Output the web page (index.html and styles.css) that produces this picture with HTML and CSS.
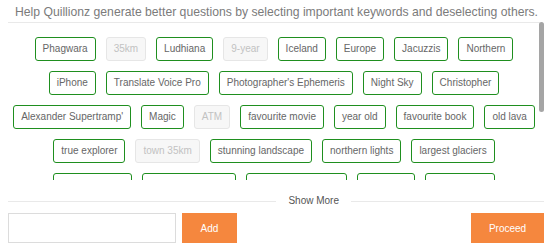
FILE: index.html
```html
<!DOCTYPE html>
<html>
<head>
<meta charset="utf-8">
<link rel="stylesheet" href="styles.css">
</head>
<body>
<div class="page">
  <div class="intro">Help Quillionz generate better questions by selecting important keywords and deselecting others.</div>
  <div class="keywords">
    <div class="scroller">
      <div class="chips">
        <span class="chip">Phagwara</span>
        <span class="chip off">35km</span>
        <span class="chip">Ludhiana</span>
        <span class="chip off">9-year</span>
        <span class="chip">Iceland</span>
        <span class="chip">Europe</span>
        <span class="chip">Jacuzzis</span>
        <span class="chip">Northern</span>
        <span class="chip">iPhone</span>
        <span class="chip">Translate Voice Pro</span>
        <span class="chip">Photographer's Ephemeris</span>
        <span class="chip">Night Sky</span>
        <span class="chip">Christopher</span>
        <span class="chip">Alexander Supertramp'</span>
        <span class="chip">Magic</span>
        <span class="chip off">ATM</span>
        <span class="chip">favourite movie</span>
        <span class="chip">year old</span>
        <span class="chip">favourite book</span>
        <span class="chip">old lava</span>
        <span class="chip">true explorer</span>
        <span class="chip off">town 35km</span>
        <span class="chip">stunning landscape</span>
        <span class="chip">northern lights</span>
        <span class="chip">largest glaciers</span>
        <span class="chip">volcanic rocks</span>
        <span class="chip">midnight sun hike</span>
        <span class="chip">Reykjavik harbours</span>
        <span class="chip">waterfalls</span>
        <span class="chip">black beach</span>
        <span class="chip">Golden Circle</span>
        <span class="chip">hot springs</span>
        <span class="chip">Blue Lagoon</span>
        <span class="chip off">2 days</span>
        <span class="chip">road trip</span>
        <span class="chip">geysers</span>
        <span class="chip">camper van</span>
        <span class="chip">wild horses</span>
        <span class="chip">puffins</span>
        <span class="chip">ice caves</span>
        <span class="chip">glacier lagoon</span>
        <span class="chip">aurora</span>
        <span class="chip">fjords</span>
        <span class="chip">lava fields</span>
        <span class="chip">hiking trail</span>
        <span class="chip">summer</span>
      </div>
    </div>
    <span class="thumb"></span>
  </div>
  <div class="more">
    <span class="more-line"></span>
    <span class="more-label">Show More</span>
    <span class="more-line short"></span>
  </div>
  <div class="actions">
    <input class="field" type="text">
    <button class="btn">Add</button>
    <span class="spacer"></span>
    <button class="btn proceed">Proceed</button>
  </div>
</div>
</body>
</html>
```
FILE: styles.css
```css
html, body {
  margin: 0;
  padding: 0;
  background: #ffffff;
}
body {
  font-family: "Liberation Sans", Arial, sans-serif;
}
.page {
  width: 537px;
  padding-left: 8px;
}
.intro {
  height: 22px;
  box-sizing: border-box;
  padding-top: 4px;
  font-size: 12.2px;
  line-height: 16px;
  color: #7b7b7b;
  text-align: center;
  white-space: nowrap;
}
.keywords {
  position: relative;
}
.scroller {
  height: 158px;
  box-sizing: border-box;
  border-top: 1px solid #e9e9e9;
  margin-right: 5px;
  overflow: hidden;
}
.thumb {
  position: absolute;
  top: 0;
  right: 1px;
  width: 5px;
  height: 90px;
  border-radius: 3px;
  background: #a5a5a5;
}
.chips {
  display: flex;
  flex-wrap: wrap;
  justify-content: center;
  padding-top: 9px;
}
.chip {
  display: block;
  height: 24px;
  box-sizing: border-box;
  margin: 5px;
  padding: 0 7px;
  border: 1px solid #1f8f1f;
  border-radius: 3px;
  font-size: 10px;
  line-height: 22px;
  color: #666666;
  white-space: nowrap;
}
.chip.off {
  background: #f7f7f7;
  border-color: #e6e6e6;
  color: #c2c2c2;
}
.more {
  display: flex;
  align-items: center;
  height: 14px;
  margin-top: 14px;
  margin-right: 1px;
}
.more-line {
  flex: 1;
  height: 1px;
  background: #e9e9e9;
}
.more-line.short {
  flex: none;
  width: 193px;
}
.more-label {
  padding: 0 12px;
  font-size: 10px;
  line-height: 14px;
  color: #555555;
}
.actions {
  display: flex;
  align-items: center;
  margin-top: 5px;
  margin-right: 1px;
  gap: 6px;
}
.field {
  width: 168px;
  height: 30px;
  box-sizing: border-box;
  margin: 0;
  border: 1px solid #dcdcdc;
  background: #ffffff;
  outline: none;
}
.spacer {
  flex: 1;
}
.btn {
  width: 55px;
  height: 30px;
  margin: 0;
  padding: 0;
  border: none;
  background: #f5873e;
  color: #ffffff;
  font-family: "Liberation Sans", Arial, sans-serif;
  font-size: 10px;
}
.btn.proceed {
  width: 73px;
}
```
